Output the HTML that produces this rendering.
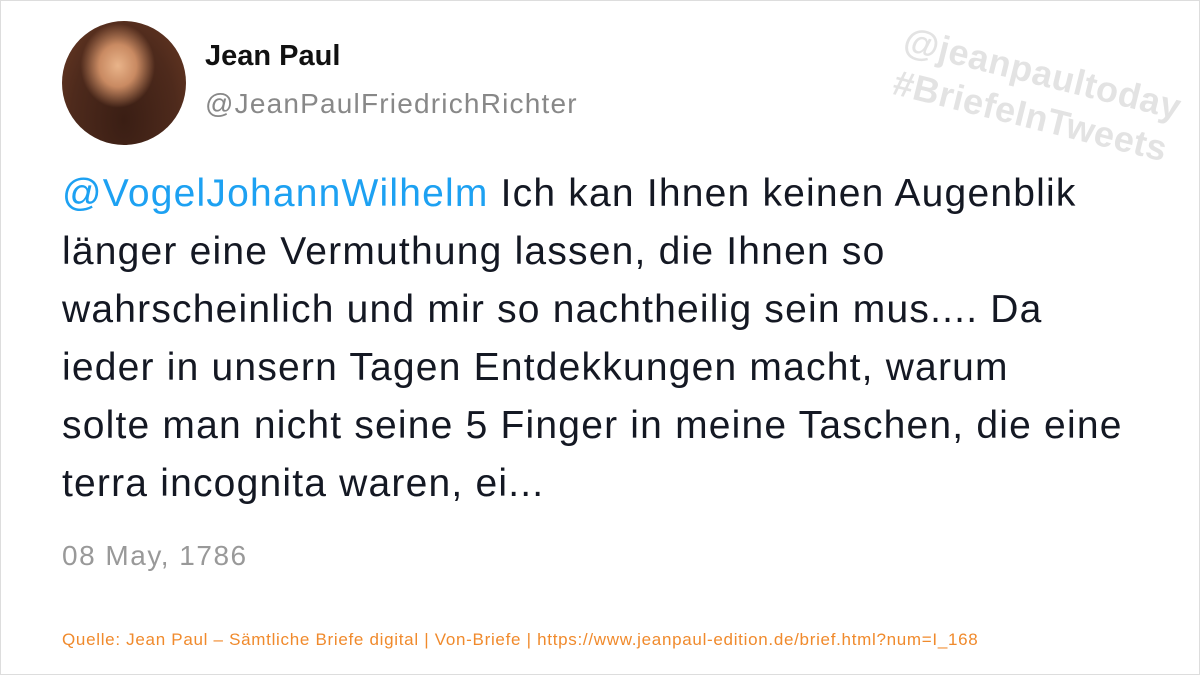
<!DOCTYPE html>
<html><head><meta charset="utf-8"><style>
html,body{margin:0;padding:0}
body{width:1200px;height:675px;position:relative;background:#fff;font-family:"Liberation Sans",sans-serif;overflow:hidden}
.frame{position:absolute;left:0;top:0;width:1198px;height:673px;border:1px solid #ddd}
.av{position:absolute;left:62px;top:21px;width:124px;height:124px;border-radius:50%;background:radial-gradient(ellipse 30% 34% at 45% 36%,#e9b48a 0%,#c98a62 50%,transparent 100%),radial-gradient(ellipse at 50% 80%,#3a1e14 0%,#4e2a1c 60%,#6a3a24 100%)}
.name{position:absolute;left:205px;top:40px;font-size:29px;font-weight:bold;color:#111}
.handle{position:absolute;left:205px;top:88px;font-size:28px;color:#888;letter-spacing:1.2px}
.text{position:absolute;left:62px;top:165px;width:1130px;font-size:39px;line-height:58px;color:#141823;letter-spacing:1.2px}
.text a{color:#1da1f2;text-decoration:none}
.date{position:absolute;left:62px;top:540px;font-size:28px;color:#999;letter-spacing:1.5px}
.src{position:absolute;left:62px;top:630px;font-size:17px;color:#f08a2c;letter-spacing:0.7px;white-space:nowrap}
.wm{position:absolute;left:910px;top:18px;font-size:36px;font-weight:bold;color:#e3e3e3;transform:rotate(14deg);transform-origin:0 0;line-height:44px;white-space:nowrap;letter-spacing:0.5px}
</style></head><body>
<div class="frame"></div>
<div class="wm">@jeanpaultoday<br>#BriefeInTweets</div>
<div class="av"></div>
<div class="name">Jean Paul</div>
<div class="handle">@JeanPaulFriedrichRichter</div>
<div class="text"><a>@VogelJohannWilhelm</a> Ich kan Ihnen keinen Augenblik<br>länger eine Vermuthung lassen, die Ihnen so<br>wahrscheinlich und mir so nachtheilig sein mus.... Da<br>ieder in unsern Tagen Entdekkungen macht, warum<br>solte man nicht seine 5 Finger in meine Taschen, die eine<br>terra incognita waren, ei...</div>
<div class="date">08 May, 1786</div>
<div class="src">Quelle: Jean Paul – Sämtliche Briefe digital | Von-Briefe | https://www.jeanpaul-edition.de/brief.html?num=I_168</div>
</body></html>
